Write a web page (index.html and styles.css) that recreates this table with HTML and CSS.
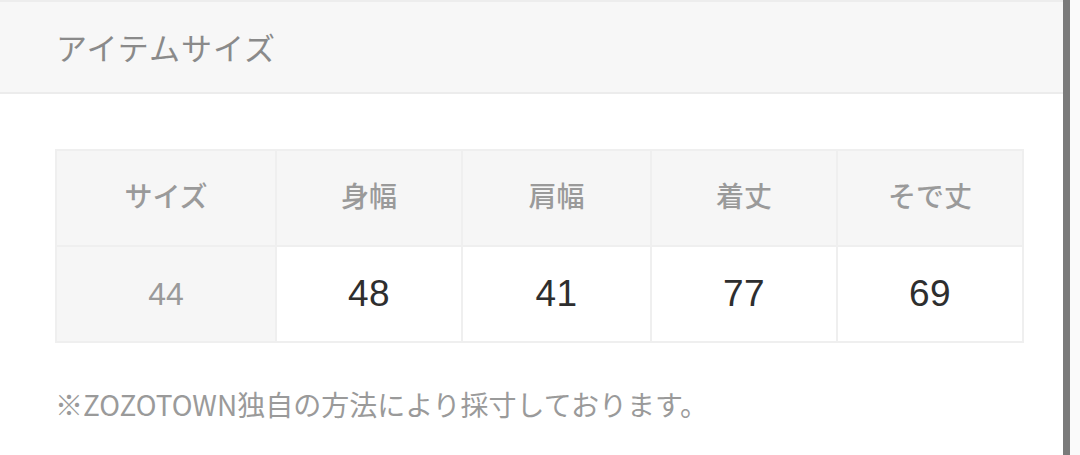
FILE: index.html
```html
<!DOCTYPE html>
<html lang="ja">
<head>
<meta charset="utf-8">
<link rel="stylesheet" href="styles.css">
</head>
<body>
<div class="page">
  <main class="main">
    <header class="head"><h2 class="title">アイテムサイズ</h2></header>
    <section class="body">
      <div class="grid">
        <div class="cell th">サイズ</div>
        <div class="cell th">身幅</div>
        <div class="cell th">肩幅</div>
        <div class="cell th">着丈</div>
        <div class="cell th">そで丈</div>
        <div class="cell rowhead">44</div>
        <div class="cell td">48</div>
        <div class="cell td">41</div>
        <div class="cell td">77</div>
        <div class="cell td">69</div>
      </div>
      <p class="note">※ZOZOTOWN独自の方法により採寸しております。</p>
    </section>
  </main>
  <div class="scrollbar"></div>
  <div class="edge"></div>
</div>
</body>
</html>
```
FILE: styles.css
```css
html, body {
  margin: 0;
  padding: 0;
  background: #ffffff;
}
body {
  font-family: "Liberation Sans", "Noto Sans CJK JP", sans-serif;
  width: 1080px;
  height: 455px;
  overflow: hidden;
}
.page {
  display: flex;
  height: 455px;
}
.main {
  width: 1063px;
  flex: none;
}
.head {
  height: 89px;
  background: #f7f7f7;
  border-top: 2px solid #ededed;
  border-bottom: 2px solid #ececec;
  display: flex;
  align-items: center;
  padding-left: 56px;
  padding-bottom: 1px;
  box-sizing: content-box;
}
.title {
  margin: 0;
  font-family: "Noto Sans CJK JP", sans-serif;
  font-weight: 400;
  font-size: 31px;
  color: #8a8a8a;
  letter-spacing: 1px;
}
.body {
  padding: 55px 0 0 55px;
}
.grid {
  display: grid;
  grid-template-columns: 218px 184px 187px 184px 184px;
  grid-template-rows: 94px 94px;
  gap: 2px;
  padding: 2px;
  background: #efefef;
  width: max-content;
}
.cell {
  display: flex;
  align-items: center;
  justify-content: center;
}
.th {
  background: #f6f6f6;
  color: #9a9a9a;
  font-family: "Noto Sans CJK JP", sans-serif;
  font-size: 28px;
  font-weight: 500;
  padding-bottom: 6px;
}
.rowhead {
  background: #f6f6f6;
  color: #9a9a9a;
  font-size: 32px;
}
.td {
  background: #ffffff;
  color: #2e2e2e;
  font-size: 37px;
  letter-spacing: 0.5px;
}
.note {
  margin: 43px 0 0 0;
  font-family: "Noto Sans CJK JP", sans-serif;
  font-size: 28px;
  color: #9a9a9a;
  line-height: 36px;
}
.scrollbar {
  width: 7px;
  flex: none;
  background: #7a7a7a;
}
.edge {
  flex: 1;
  background: #fafafa;
}
```
